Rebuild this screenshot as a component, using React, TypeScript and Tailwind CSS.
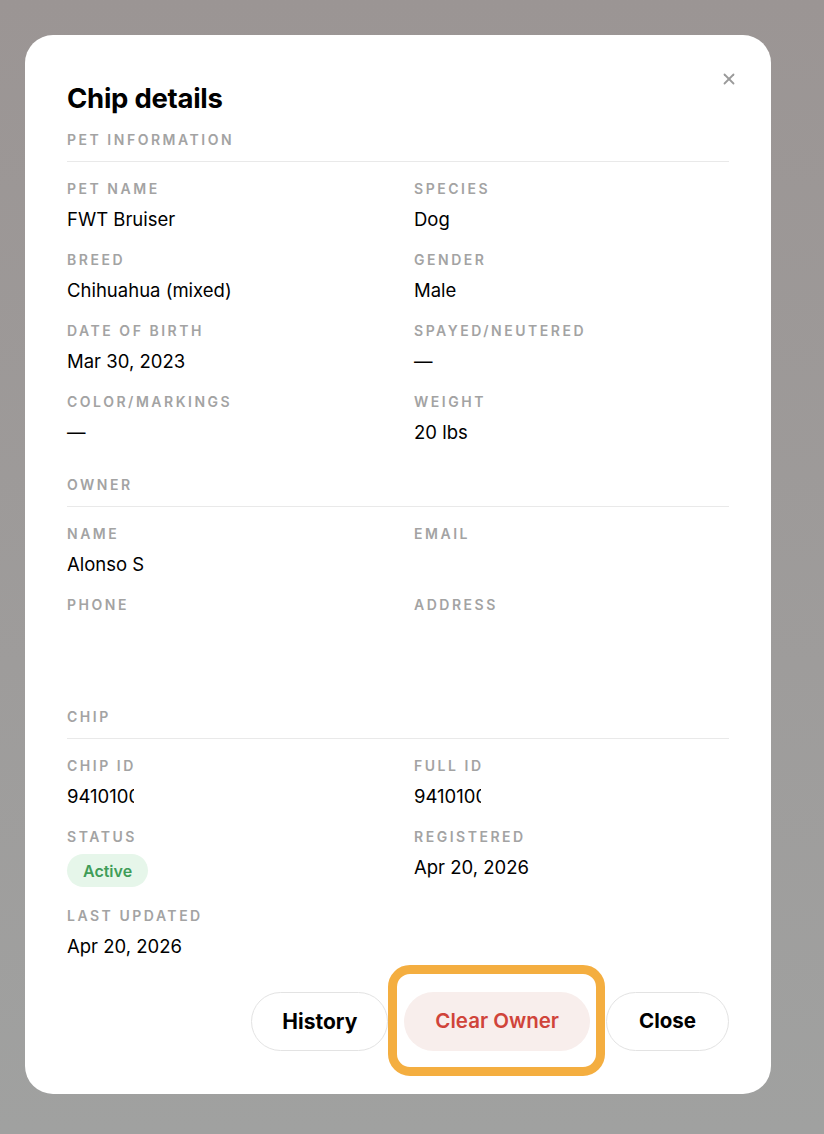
import { X } from 'lucide-react';

type Field = { label: string; value?: string; clip?: boolean; tall?: boolean; badge?: boolean };

const pet: Field[] = [
  { label: 'Pet Name', value: 'FWT Bruiser' },
  { label: 'Species', value: 'Dog' },
  { label: 'Breed', value: 'Chihuahua (mixed)' },
  { label: 'Gender', value: 'Male' },
  { label: 'Date of Birth', value: 'Mar 30, 2023' },
  { label: 'Spayed/Neutered', value: '—' },
  { label: 'Color/Markings', value: '—' },
  { label: 'Weight', value: '20 lbs' },
];

const owner: Field[] = [
  { label: 'Name', value: 'Alonso S' },
  { label: 'Email', value: '' },
  { label: 'Phone', value: '', tall: true },
  { label: 'Address', value: '', tall: true },
];

const chip: Field[] = [
  { label: 'Chip ID', value: '941010000123456', clip: true },
  { label: 'Full ID', value: '941010000123456', clip: true },
  { label: 'Status', badge: true },
  { label: 'Registered', value: 'Apr 20, 2026' },
  { label: 'Last Updated', value: 'Apr 20, 2026' },
];

function SectionTitle({ children }: { children: string }) {
  return (
    <div className="border-b border-[#e9e9e9] pb-[13px] mb-[19px]">
      <p className="text-[14px] leading-4 font-semibold uppercase tracking-[0.18em] text-[#a3a3a3]">{children}</p>
    </div>
  );
}

function Grid({ fields }: { fields: Field[] }) {
  return (
    <div className="grid grid-cols-2 gap-x-8 gap-y-[21px]">
      {fields.map((f) => (
        <div key={f.label}>
          <p className="text-[14px] leading-4 font-semibold uppercase tracking-[0.18em] text-[#a3a3a3]">{f.label}</p>
          {f.badge ? (
            <span className="mt-[9px] inline-flex h-[33px] items-center rounded-full bg-[#e6f6ea] px-[16px] text-[16px] font-semibold text-[#3f9d58]">
              Active
            </span>
          ) : (
            <p
              className={`mt-[10px] text-[18.5px] leading-6 text-black ${f.tall ? 'min-h-[53px]' : 'min-h-6'} ${
                f.clip ? 'w-[67px] overflow-hidden whitespace-nowrap' : ''
              }`}
            >
              {f.value}
            </p>
          )}
        </div>
      ))}
    </div>
  );
}

export default function App() {
  return (
    <div
      className="min-h-[1134px] bg-gradient-to-b from-[#9b9594] to-[#a0a1a0] pl-[25px] pt-[35px]"
      style={{ fontFamily: 'Inter, "Liberation Sans", sans-serif' }}
    >
      <div className="relative w-[746px] rounded-[28px] bg-white px-[42px] pt-[46px] pb-[43px]">
        <button className="absolute right-[33px] top-[35px] text-[#9a9a9a]">
          <X size={18} strokeWidth={2.4} />
        </button>
        <h1 className="text-[27.5px] leading-[34px] font-bold text-black tracking-[-0.01em]">Chip details</h1>

        <div className="mt-[17px]">
          <SectionTitle>Pet Information</SectionTitle>
          <Grid fields={pet} />
        </div>

        <div className="mt-[33px]">
          <SectionTitle>Owner</SectionTitle>
          <Grid fields={owner} />
        </div>

        <div className="mt-[33px]">
          <SectionTitle>Chip</SectionTitle>
          <Grid fields={chip} />
        </div>

        <div className="mt-[34px] flex justify-end gap-4">
          <button className="h-[59px] rounded-full border border-[#e3e3e3] bg-white px-[30px] text-[21px] font-bold text-black">
            History
          </button>
          <div className="relative">
            <div className="absolute -left-[16px] -right-[15px] -top-[27px] -bottom-[25px] rounded-[22px] border-[9px] border-[#f4ae40]" />
            <button className="relative h-[59px] rounded-full bg-[#f8eeec] px-[31px] text-[20.5px] font-semibold text-[#d0443a]">
              Clear Owner
            </button>
          </div>
          <button className="h-[59px] rounded-full border border-[#e3e3e3] bg-white px-[32px] text-[20.5px] font-bold text-black">
            Close
          </button>
        </div>
      </div>
    </div>
  );
}
